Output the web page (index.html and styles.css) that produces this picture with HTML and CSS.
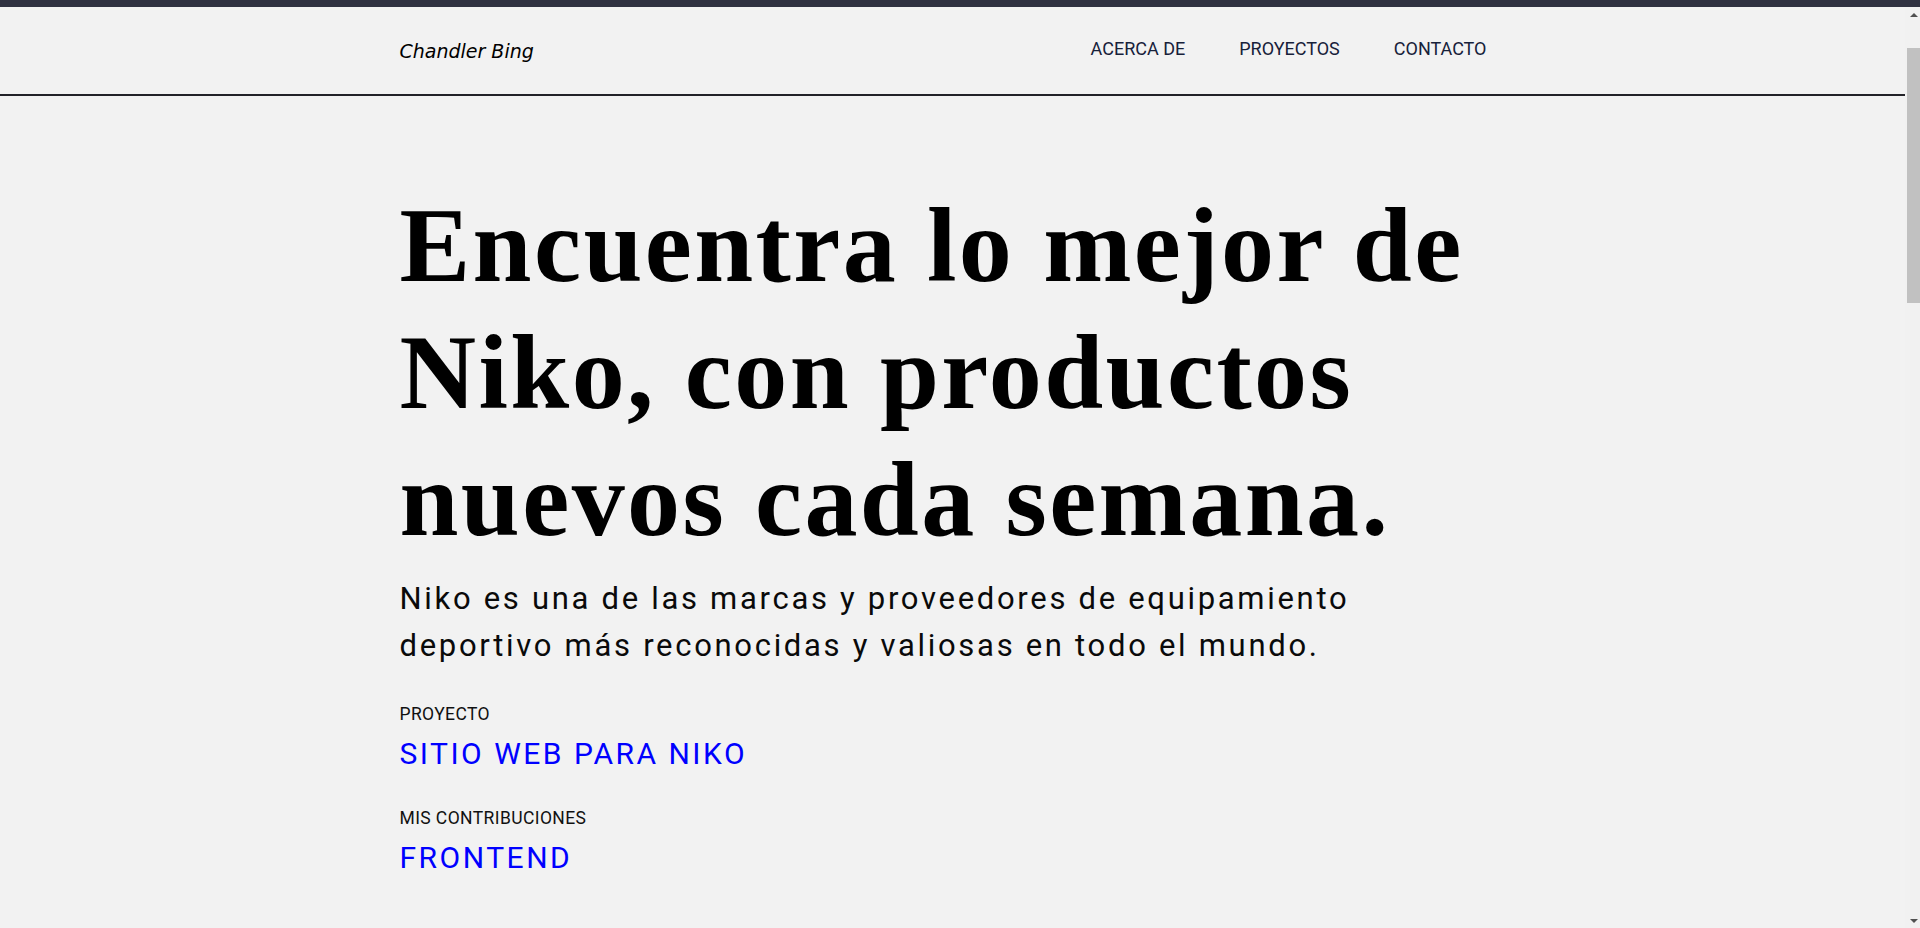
FILE: index.html
```html
<!DOCTYPE html>
<html lang="es">
<head>
<meta charset="utf-8">
<title>Chandler Bing</title>
<link rel="stylesheet" href="styles.css">
</head>
<body>
<div class="topbar"></div>
<div class="viewport">
  <div class="page">
    <header class="site-header">
      <div class="container header-inner">
        <a class="logo" href="#">Chandler Bing</a>
        <nav class="nav">
          <ul class="nav-list">
            <li><a class="nav-link" href="#acerca">ACERCA DE</a></li>
            <li><a class="nav-link" href="#proyectos">PROYECTOS</a></li>
            <li><a class="nav-link" href="#contacto">CONTACTO</a></li>
          </ul>
        </nav>
      </div>
    </header>
    <main class="main">
      <section class="container hero">
        <h1 class="hero-title">Encuentra lo mejor de Niko, con productos nuevos cada semana.</h1>
        <p class="hero-text">Niko es una de las marcas y proveedores de equipamiento deportivo más reconocidas y valiosas en todo el mundo.</p>
        <dl class="meta">
          <div class="meta-item">
            <dt class="meta-label">PROYECTO</dt>
            <dd class="meta-value"><a href="#">SITIO WEB PARA NIKO</a></dd>
          </div>
          <div class="meta-item">
            <dt class="meta-label">MIS CONTRIBUCIONES</dt>
            <dd class="meta-value"><a href="#">FRONTEND</a></dd>
          </div>
        </dl>
      </section>
    </main>
  </div>
  <div class="scrollbar" aria-hidden="true">
    <div class="sb-button"><span class="sb-arrow sb-arrow-up"></span></div>
    <div class="sb-track"><div class="sb-thumb"></div></div>
    <div class="sb-button"><span class="sb-arrow sb-arrow-down"></span></div>
  </div>
</div>
</body>
</html>
```

FILE: styles.css
```css
* { box-sizing: border-box; }

html, body {
  margin: 0;
  padding: 0;
  height: 100%;
}

body {
  display: flex;
  flex-direction: column;
  overflow: hidden;
  background: #f2f2f2;
  color: #000;
  font-family: Roboto, "Liberation Sans", sans-serif;
}

.topbar {
  flex: 0 0 7px;
  background: #303241;
}

.viewport {
  flex: 1 1 auto;
  display: flex;
  min-height: 0;
}

.page {
  flex: 1 1 auto;
  overflow: hidden;
  background: #f2f2f2;
}

/* scrollbar drawn to match the browser chrome in the reference */
.scrollbar {
  flex: 0 0 15px;
  display: flex;
  flex-direction: column;
  background: #f1f1f1;
}

.sb-button {
  flex: 0 0 15px;
  display: flex;
  align-items: center;
  justify-content: center;
  padding-left: 2px;
}

.sb-arrow {
  width: 0;
  height: 0;
  border-left: 4px solid transparent;
  border-right: 4px solid transparent;
}

.sb-arrow-up {
  border-bottom: 4px solid #505050;
}

.sb-arrow-down {
  border-top: 4px solid #505050;
}

.sb-track {
  flex: 1 1 auto;
  display: flex;
  flex-direction: column;
}

.sb-thumb {
  margin-top: 26px;
  margin-left: 2px;
  height: 255px;
  background: #c1c1c1;
}

.container {
  max-width: 1106px;
  margin: 0 auto;
}

.site-header {
  background: #f2f2f2;
  border-bottom: 2px solid #222228;
}

.header-inner {
  height: 87px;
  display: flex;
  align-items: center;
  justify-content: space-between;
}

.logo {
  font-family: "DejaVu Sans", sans-serif;
  font-style: italic;
  font-size: 19px;
  color: #000;
  text-decoration: none;
}

.nav {
  padding-bottom: 4px;
  padding-right: 19px;
}

.nav-list {
  list-style: none;
  margin: 0;
  padding: 0;
  display: flex;
  gap: 54px;
}

.nav-link {
  font-family: Roboto, sans-serif;
  font-size: 18px;
  color: #17213a;
  text-decoration: none;
}

.main {
  padding-top: 86px;
}

.hero-title {
  margin: 0;
  font-family: "Liberation Serif", serif;
  font-weight: 700;
  font-size: 106px;
  line-height: 127px;
  letter-spacing: 2.4px;
  color: #000;
}

.hero-text {
  margin: 12px 0 0;
  max-width: 1000px;
  font-family: Roboto, sans-serif;
  font-size: 31px;
  line-height: 47px;
  letter-spacing: 2.7px;
  color: #0a0a0a;
}

.meta {
  margin: 35px 0 0;
  display: flex;
  flex-direction: column;
  gap: 36px;
}

.meta-item {
  display: flex;
  flex-direction: column;
  gap: 11px;
}

.meta-label {
  font-family: Roboto, sans-serif;
  font-size: 17.5px;
  line-height: 21px;
  letter-spacing: 0.4px;
  color: #111;
}

.meta-value {
  margin: 0;
  font-family: Roboto, sans-serif;
  font-size: 30px;
  line-height: 36px;
  letter-spacing: 2.5px;
}

.meta-value a {
  color: #0000ff;
  text-decoration: none;
}
```
